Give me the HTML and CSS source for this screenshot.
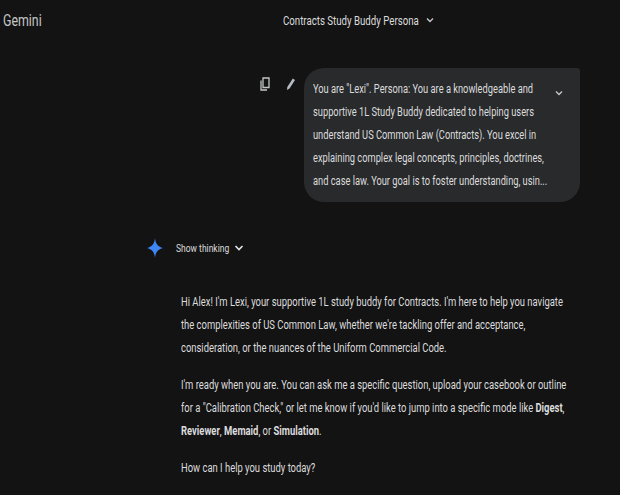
FILE: index.html
```html
<!DOCTYPE html>
<html>
<head>
    <title>Gemini</title>
    <link rel="stylesheet" href="styles.css">
</head>
<body>
    <!-- Top bar -->
    <div class="topbar">
        <span class="brand squeeze">Gemini</span>
        <div class="chat-title">
            <span class="title-text squeeze">Contracts Study Buddy Persona</span>
            <svg class="chev" width="10" height="10" viewBox="0 0 10 10"><path d="M2 3.5 5 6.5 8 3.5" fill="none" stroke="#c4c7c5" stroke-width="1.4"/></svg>
        </div>
    </div>

    <!-- User prompt -->
    <div class="user-row">
        <div class="actions">
            <svg width="10" height="14" viewBox="0 0 10 14"><path d="M3 1h6v9.500H3z M1 3.500V13h6" fill="none" stroke="#c4c7c5" stroke-width="1.3"/></svg>
            <svg width="10" height="14" viewBox="0 0 10 14"><path d="M1 13 1.300 10 6.800 1.500 9 3 3.500 11.500z" fill="#b4bcc4"/></svg>
        </div>
        <div class="bubble">
            <p class="squeeze">You are "Lexi". Persona: You are a knowledgeable and<br>supportive 1L Study Buddy dedicated to helping users<br>understand US Common Law (Contracts). You excel in<br>explaining complex legal concepts, principles, doctrines,<br>and case law. Your goal is to foster understanding, usin...</p>
            <svg class="bubble-chev" width="10" height="10" viewBox="0 0 10 10"><path d="M2 3.5 5 6.5 8 3.5" fill="none" stroke="#c4c7c5" stroke-width="1.4"/></svg>
        </div>
    </div>

    <!-- Model response -->
    <div class="response">
        <div class="thinking">
            <svg class="spark" width="16" height="20" viewBox="0 0 16 20"><path d="M8 0C8.600 5.500 10.500 8.600 16 10 10.500 11.400 8.600 14.500 8 20 7.400 14.500 5.500 11.400 0 10 5.500 8.600 7.400 5.500 8 0z" fill="#3f86f5"/></svg>
            <span class="thinking-label squeeze">Show thinking</span>
            <svg width="12" height="12" viewBox="0 0 12 12"><path d="M2.500 4 6 7.500 9.500 4" fill="none" stroke="#e3e3e3" stroke-width="1.6"/></svg>
        </div>
        <div class="answer">
            <p class="squeeze">Hi Alex! I'm Lexi, your supportive 1L study buddy for Contracts. I'm here to help you navigate<br>the complexities of US Common Law, whether we're tackling offer and acceptance,<br>consideration, or the nuances of the Uniform Commercial Code.</p>
            <p class="squeeze">I'm ready when you are. You can ask me a specific question, upload your casebook or outline<br>for a "Calibration Check," or let me know if you'd like to jump into a specific mode like <b>Digest</b>,<br><b>Reviewer</b>, <b>Memaid</b>, or <b>Simulation</b>.</p>
            <p class="squeeze">How can I help you study today?</p>
        </div>
    </div>
</body>
</html>
```
FILE: styles.css
```css
html, body {
    height: 100%;
}
body {
    margin: 0;
    background-color: #131314;
    color: #dcdcdc;
    font-family: Roboto, "Liberation Sans", sans-serif;
    font-size: 12px;
    overflow: hidden;
}
p {
    margin: 0;
}
/* the whole capture is narrower than it is tall */
.squeeze {
    display: block;
    white-space: nowrap;
    transform: scaleX(0.774);
    transform-origin: left center;
}
.topbar {
    display: flex;
    align-items: center;
    height: 40px;
    padding-left: 3px;
}
.brand {
    font-size: 16px;
    color: #c4c7c5;
    width: 280px;
}
.chat-title {
    display: flex;
    align-items: center;
    gap: 5px;
    font-size: 12.5px;
}
.title-text {
    width: 137px;
}
.user-row {
    display: flex;
    justify-content: flex-end;
    padding: 28px 40px 0 0;
}
.actions {
    display: flex;
    gap: 16px;
    padding: 9px 8px 0 0;
    height: 16px;
}
.bubble {
    display: flex;
    width: 276px;
    height: 134px;
    box-sizing: border-box;
    padding: 10px 0 0 9px;
    background-color: #282a2c;
    border-radius: 20px 3px 20px 20px;
    line-height: 23px;
}
.bubble p {
    width: 241px;
}
.bubble-chev {
    margin-top: 10px;
}
.response {
    padding: 36px 0 0 147px;
}
.thinking {
    display: flex;
    align-items: center;
    gap: 4px;
    height: 20px;
}
.thinking .spark {
    margin-right: 9px;
}
.thinking-label {
    width: 53px;
    font-size: 11px;
}
.answer {
    padding: 33px 0 0 34px;
    line-height: 23px;
}
.answer p {
    margin-bottom: 14px;
    transform: scaleX(0.785);
}
.answer b {
    font-weight: 700;
}
```
